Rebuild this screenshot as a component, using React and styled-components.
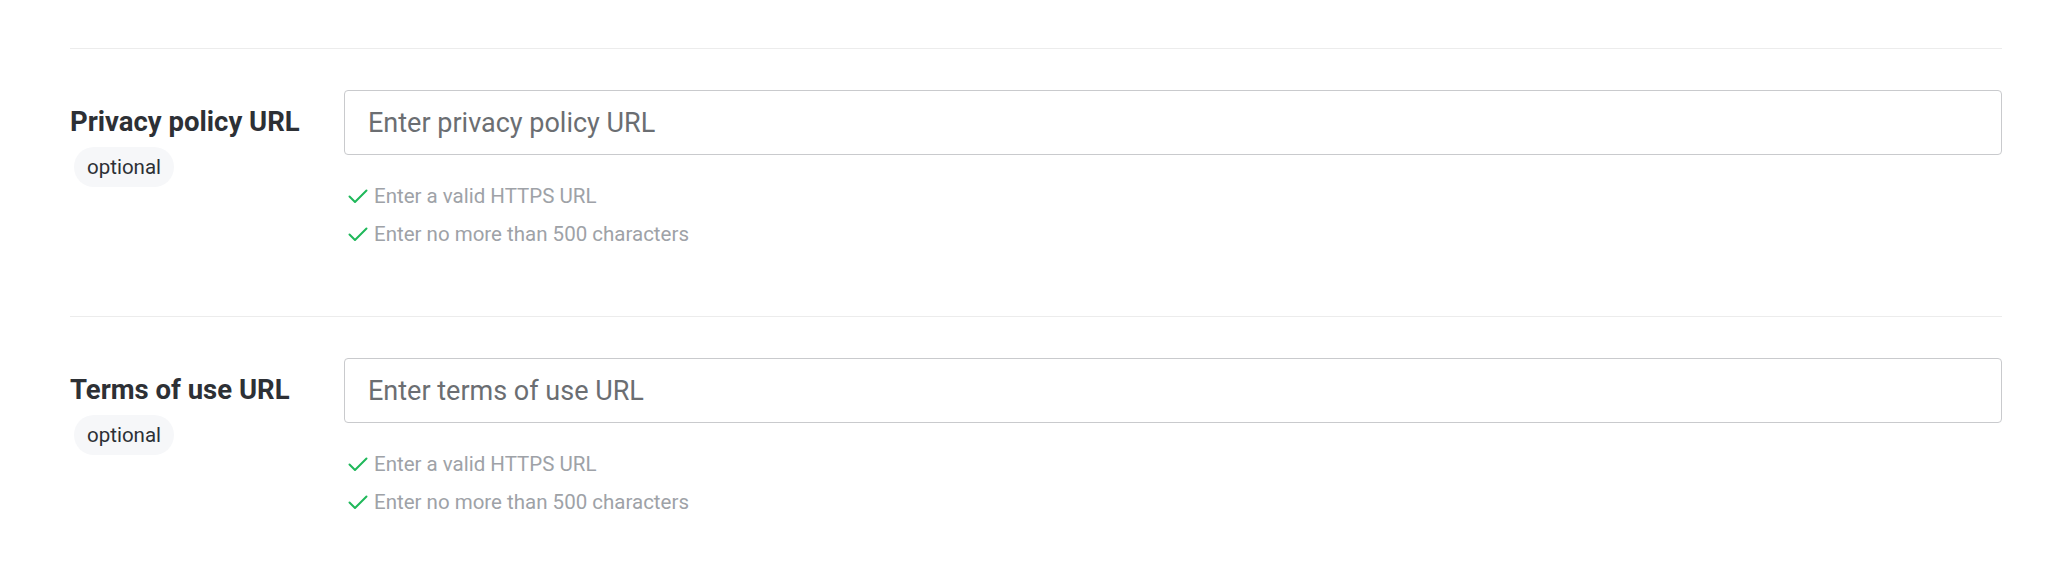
import React from "react";
import styled, { createGlobalStyle } from "styled-components";

const GlobalStyle = createGlobalStyle`
  html, body {
    margin: 0;
    padding: 0;
    background: #ffffff;
    font-family: Roboto, "Noto Sans", "Liberation Sans", sans-serif;
  }
`;

const Page = styled.div`
  padding: 48px 46px 0 70px;
`;

const Section = styled.section`
  display: flex;
  border-top: 1px solid #ececec;
  padding: 41px 0 70px;
`;

const LabelColumn = styled.div`
  width: 274px;
  flex-shrink: 0;
  padding-top: 16px;
`;

const Label = styled.div`
  font-size: 27.5px;
  line-height: 32px;
  font-weight: 700;
  color: #2d3035;
`;

const Badge = styled.span`
  display: inline-flex;
  align-items: center;
  height: 40px;
  margin: 9px 0 0 4px;
  padding: 0 13px;
  border-radius: 20px;
  background: #f6f7f9;
  font-size: 20.5px;
  color: #2d3035;
`;

const FieldColumn = styled.div`
  flex: 1;
  min-width: 0;
`;

const Input = styled.input`
  box-sizing: border-box;
  width: 100%;
  height: 65px;
  padding: 0 23px;
  border: 1px solid #c9cacd;
  border-radius: 4px;
  background: #ffffff;
  font-family: inherit;
  font-size: 27px;
  color: #2d3035;
  outline: none;

  &::placeholder {
    color: #6b6e72;
  }
`;

const Rules = styled.ul`
  list-style: none;
  margin: 29px 0 0;
  padding: 0 0 0 4px;
  display: flex;
  flex-direction: column;
  gap: 14px;
`;

const Rule = styled.li`
  display: flex;
  align-items: center;
  gap: 6px;
  font-size: 20.5px;
  line-height: 24px;
  color: #9ea2a7;
`;

const Check = () => (
  <svg width="20" height="15" viewBox="0 0 20 15" fill="none">
    <polyline
      points="1.5,7.5 7,13 18.5,1.5"
      stroke="#1fb85a"
      strokeWidth="2"
      strokeLinecap="round"
      strokeLinejoin="round"
    />
  </svg>
);

const fields = [
  { label: "Privacy policy URL", placeholder: "Enter privacy policy URL" },
  { label: "Terms of use URL", placeholder: "Enter terms of use URL" },
];

const rules = ["Enter a valid HTTPS URL", "Enter no more than 500 characters"];

const App = () => {
  return (
    <Page>
      <GlobalStyle />
      {fields.map((f) => (
        <Section key={f.label}>
          <LabelColumn>
            <Label>{f.label}</Label>
            <Badge>optional</Badge>
          </LabelColumn>
          <FieldColumn>
            <Input type="text" placeholder={f.placeholder} />
            <Rules>
              {rules.map((r) => (
                <Rule key={r}>
                  <Check />
                  {r}
                </Rule>
              ))}
            </Rules>
          </FieldColumn>
        </Section>
      ))}
    </Page>
  );
};

export default App;
